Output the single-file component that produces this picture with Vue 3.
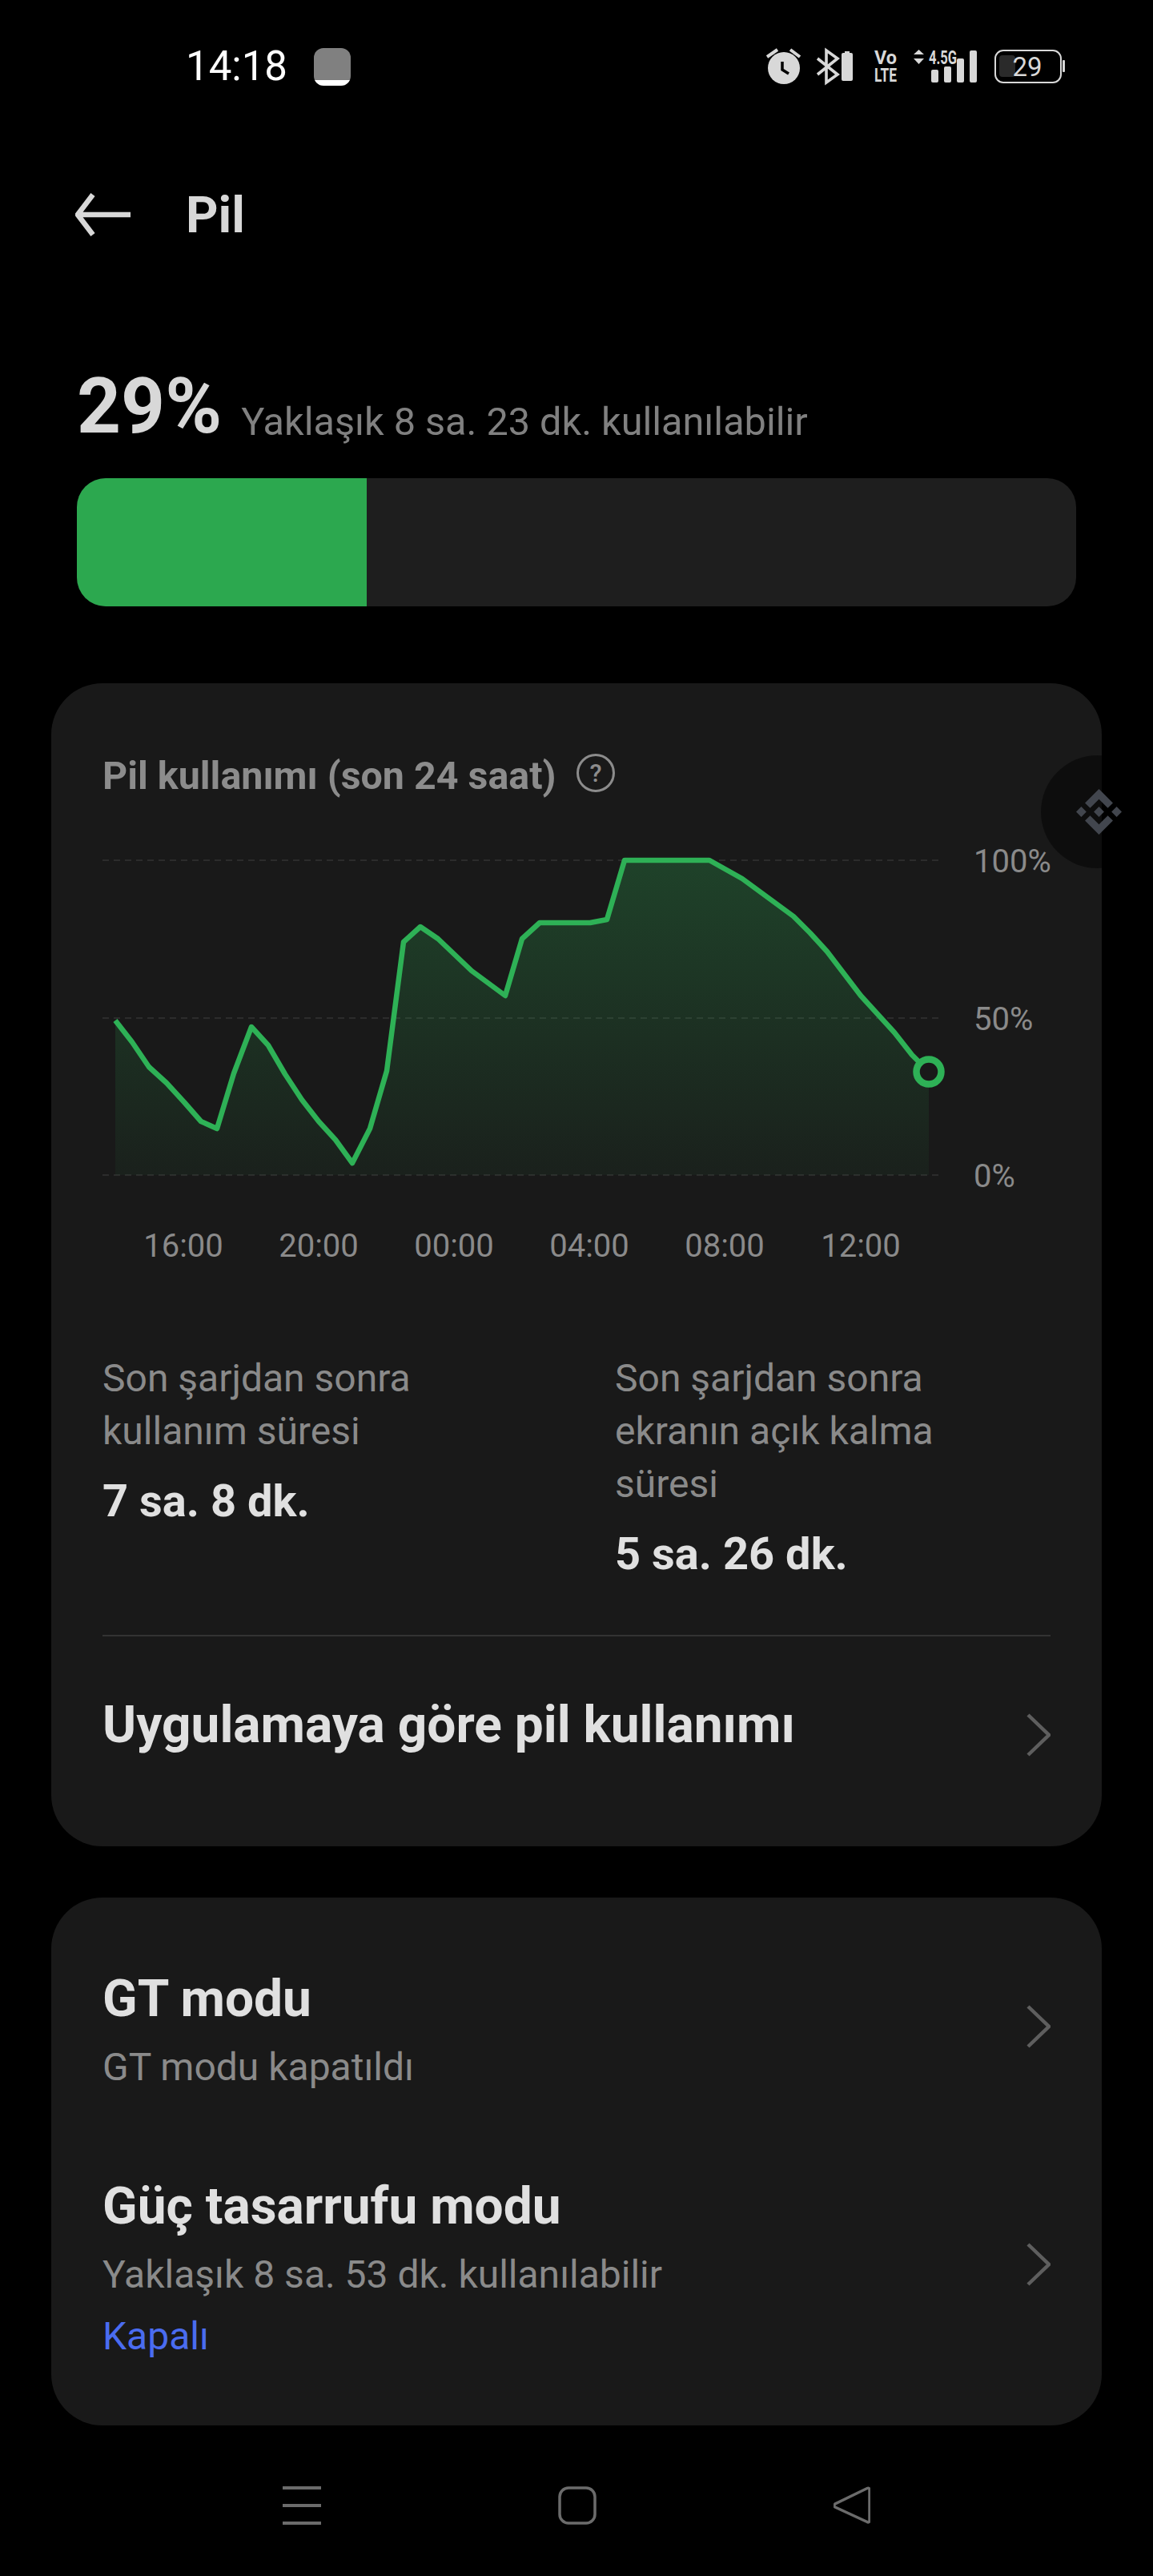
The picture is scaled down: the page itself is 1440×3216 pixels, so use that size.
<template>
  <div class="page">
    <div class="status">
      <span class="clock">14:18</span>
      <span class="square"></span>
      <svg class="status-icons" width="385" height="55" viewBox="950 55 385 55">
        <circle cx="979" cy="85" r="20" fill="#d8d8d8" />
        <path d="M977 77v10l8 5" fill="none" stroke="#000" stroke-width="3.5" />
        <path d="M958 71l13-9M987 62l12 9" fill="none" stroke="#d8d8d8" stroke-width="4" />
        <path d="M1021 73l25 20-14 10V63l14 10-25 20" fill="none" stroke="#d8d8d8" stroke-width="3.6" />
        <rect x="1051" y="66" width="14" height="35" rx="2" fill="#d8d8d8" />
        <rect x="1055" y="64" width="6" height="2" fill="#d8d8d8" />
        <text x="1092" y="80" class="tiny" textLength="28" lengthAdjust="spacingAndGlyphs">Vo</text>
        <text x="1092" y="102" class="tiny" textLength="28" lengthAdjust="spacingAndGlyphs">LTE</text>
        <path d="M1141 68l6.500-6 6.500 6zM1141 73h13l-6.500 7z" fill="#d8d8d8" />
        <text x="1160" y="80" class="tiny" textLength="35" lengthAdjust="spacingAndGlyphs">4.5G</text>
        <rect x="1163" y="87" width="9" height="16" rx="2" fill="#d8d8d8" />
        <rect x="1179" y="83" width="9" height="20" rx="2" fill="#d8d8d8" />
        <rect x="1195" y="73" width="9" height="30" rx="2" fill="#d8d8d8" />
        <rect x="1211" y="63" width="9" height="40" rx="2" fill="#d8d8d8" />
        <rect x="1243" y="63" width="82" height="40" rx="10" fill="none" stroke="#d8d8d8" stroke-width="2" />
        <rect x="1248" y="69" width="20" height="27" rx="4" fill="#2a2a2a" />
        <text x="1283" y="95" class="batt-num" text-anchor="middle">29</text>
        <rect x="1327" y="75" width="3" height="15" rx="1" fill="#d8d8d8" />
      </svg>
    </div>

    <div class="topbar">
      <svg width="69" height="54" viewBox="0 0 69 54">
        <path d="M69 27H3M22 2L3 27l19 25" fill="none" stroke="#d8d8d8" stroke-width="6.500" />
      </svg>
      <span class="topbar-title">Pil</span>
    </div>

    <div class="summary">
      <span class="percent">{{ level }}%</span>
      <span class="remain">Yaklaşık 8 sa. 23 dk. kullanılabilir</span>
    </div>
    <div class="bar">
      <div class="bar-fill" :style="{ width: level + '%' }"></div>
    </div>

    <section class="card usage">
      <div class="usage-title">
        <span>Pil kullanımı (son 24 saat)</span>
        <svg width="48" height="48" viewBox="0 0 48 48">
          <circle cx="24" cy="24" r="22.500" fill="none" stroke="#8c8c8c" stroke-width="3" />
          <text x="24" y="35" class="help" text-anchor="middle">?</text>
        </svg>
      </div>

      <svg class="chart" width="1184" height="540" viewBox="128 1050 1184 540">
        <defs>
          <linearGradient id="areaFill" gradientUnits="userSpaceOnUse" x1="0" y1="1074" x2="0" y2="1467">
            <stop offset="0" stop-color="#2eb156" stop-opacity="0.27" />
            <stop offset="1" stop-color="#2eb156" stop-opacity="0.05" />
          </linearGradient>
        </defs>
        <line
          v-for="g in grid"
          :key="g.label"
          x1="128"
          x2="1175"
          :y1="g.y"
          :y2="g.y"
          stroke="#2c2c2c"
          stroke-width="2"
          stroke-dasharray="8 6"
        />
        <polygon :points="areaPoints" fill="url(#areaFill)" />
        <polyline :points="linePoints" fill="none" stroke="#2eb156" stroke-width="6.500" stroke-linejoin="round" />
        <circle cx="1160" cy="1338" r="15.500" fill="#191919" stroke="#2eb156" stroke-width="8.500" />
        <text v-for="g in grid" :key="g.label" x="1216" :y="g.y + 15" class="axis">{{ g.label }}</text>
        <text v-for="t in hours" :key="t.label" :x="t.x" y="1569" class="axis" text-anchor="middle">{{ t.label }}</text>
      </svg>

      <div class="stats">
        <div>
          <p class="stat-label">Son şarjdan sonra<br />kullanım süresi</p>
          <p class="stat-value">7 sa. 8 dk.</p>
        </div>
        <div>
          <p class="stat-label">Son şarjdan sonra<br />ekranın açık kalma<br />süresi</p>
          <p class="stat-value">5 sa. 26 dk.</p>
        </div>
      </div>

      <div class="per-app">
        <span class="row-title">Uygulamaya göre pil kullanımı</span>
        <svg class="chev chev-app" width="30" height="54" viewBox="0 0 30 54">
          <path d="M2 2l26 25L2 52" fill="none" stroke="#5e5e5e" stroke-width="4.500" />
        </svg>
      </div>
    </section>

    <section class="card modes">
      <div class="mode">
        <div>
          <p class="row-title">GT modu</p>
          <p class="mode-sub">GT modu kapatıldı</p>
        </div>
        <svg class="chev" width="30" height="54" viewBox="0 0 30 54">
          <path d="M2 2l26 25L2 52" fill="none" stroke="#5e5e5e" stroke-width="4.500" />
        </svg>
      </div>
      <div class="mode mode-saver">
        <div>
          <p class="row-title">Güç tasarrufu modu</p>
          <p class="mode-sub">Yaklaşık 8 sa. 53 dk. kullanılabilir</p>
          <p class="mode-off">Kapalı</p>
        </div>
        <svg class="chev" width="30" height="54" viewBox="0 0 30 54">
          <path d="M2 2l26 25L2 52" fill="none" stroke="#5e5e5e" stroke-width="4.500" />
        </svg>
      </div>
    </section>

    <div class="navbar">
      <svg width="48" height="48" viewBox="0 0 48 48">
        <path d="M0 2h48M0 24h48M0 46h48" stroke="#6b6b6b" stroke-width="4" />
      </svg>
      <svg width="48" height="48" viewBox="0 0 48 48">
        <rect x="2" y="2" width="44" height="44" rx="11" fill="none" stroke="#6b6b6b" stroke-width="3.500" />
      </svg>
      <svg width="46" height="48" viewBox="0 0 46 48">
        <path d="M42 2.500c2-.800 3 .500 3 2v38c0 2-1.500 3-3 2L2 26c-1.500-1-1.500-2.500 0-4z" fill="none" stroke="#6b6b6b" stroke-width="3.500" />
      </svg>
    </div>

    <div class="floater">
      <svg width="57" height="57" viewBox="0 0 32 32" fill="#42464e">
        <path d="M16 0l9.800 9.800-3.600 3.600L16 7.200l-6.200 6.200-3.600-3.600zM0 16l3.600-3.600L7.200 16l-3.600 3.600zM16 32l-9.800-9.800 3.600-3.600 6.200 6.200 6.200-6.200 3.600 3.600zM24.800 16l3.600-3.600L32 16l-3.600 3.600zM16 12.400l3.600 3.600-3.600 3.600-3.600-3.600z" />
      </svg>
    </div>
  </div>
</template>

<script setup>
const level = 29;

const grid = [
  { label: "100%", y: 1074 },
  { label: "50%", y: 1271 },
  { label: "0%", y: 1467 },
];

const hours = [
  { label: "16:00", x: 229 },
  { label: "20:00", x: 398 },
  { label: "00:00", x: 567 },
  { label: "04:00", x: 736 },
  { label: "08:00", x: 905 },
  { label: "12:00", x: 1075 },
];

const points = [
  [144, 1274], [165, 1301], [186, 1332], [208, 1352], [230, 1376], [251, 1400],
  [271, 1409], [292, 1340], [314, 1282], [335, 1305], [356, 1341], [377, 1373],
  [398, 1400], [419, 1423], [440, 1452], [462, 1409], [483, 1337], [504, 1176],
  [525, 1157], [547, 1172], [589, 1212], [631, 1243], [652, 1172], [674, 1152],
  [737, 1152], [758, 1148], [780, 1074], [886, 1074], [927, 1097], [991, 1144],
  [1012, 1165], [1033, 1188], [1075, 1243], [1117, 1289], [1139, 1317], [1160, 1338],
];

const linePoints = points.map((p) => p.join(",")).join(" ");
const areaPoints = `144,1467 ${linePoints} 1160,1467`;
</script>

<style scoped>
.page {
  position: relative;
  width: 1440px;
  height: 3216px;
  overflow: hidden;
  background: #000;
  font-family: Roboto, "Noto Sans", sans-serif;
}

p {
  margin: 0;
}

svg {
  display: block;
  flex: none;
}

.status {
  display: flex;
  align-items: center;
  height: 165px;
  padding: 0 105px 0 232px;
}

.clock {
  font-size: 51px;
  color: #fff;
}

.square {
  width: 46px;
  height: 47px;
  margin-left: 33px;
  margin-top: 2px;
  border-radius: 12px;
  background: linear-gradient(#808080 85%, #fff 85%);
}

.status-icons {
  margin-left: auto;
}

.tiny {
  font-size: 24px;
  font-weight: 700;
  fill: #d8d8d8;
}

.batt-num {
  font-size: 33px;
  fill: #d8d8d8;
}

.topbar {
  display: flex;
  align-items: center;
  gap: 69px;
  height: 104px;
  margin-top: 51px;
  padding-left: 94px;
}

.topbar-title {
  font-size: 63px;
  font-weight: 700;
  color: #d8d8d8;
}

.summary {
  display: flex;
  align-items: flex-end;
  gap: 24px;
  margin: 131px 96px 0;
}

.percent {
  font-size: 96px;
  line-height: 112px;
  font-weight: 700;
  color: #d8d8d8;
}

.remain {
  margin-bottom: 9px;
  font-size: 48.600px;
  line-height: 54px;
  color: #808080;
}

.bar {
  height: 160px;
  margin: 34px 96px 0;
  border-radius: 36px;
  overflow: hidden;
  background: #1e1e1e;
}

.bar-fill {
  height: 100%;
  background: #2ca84f;
}

.card {
  margin: 0 64px;
  padding: 0 64px;
  border-radius: 64px;
  background: #191919;
}

.usage {
  margin-top: 96px;
  padding-top: 89px;
  padding-bottom: 114px;
}

.usage-title {
  display: flex;
  align-items: center;
  gap: 25px;
  font-size: 48.400px;
  line-height: 54px;
  font-weight: 700;
  color: #8c8c8c;
}

.usage-title svg {
  margin-top: -8px;
}

.help {
  font-size: 31px;
  font-weight: 500;
  fill: #8c8c8c;
}

.chart {
  margin-top: 54px;
}

.axis {
  font-size: 40px;
  fill: #8a8a8a;
}

.stats {
  display: grid;
  grid-template-columns: 640px 1fr;
  margin-top: 98px;
}

.stat-label {
  font-size: 48px;
  line-height: 66px;
  color: #8a8a8a;
}

.stat-value {
  margin-top: 24px;
  font-size: 56px;
  line-height: 60px;
  font-weight: 700;
  color: #e0e0e0;
}

.per-app {
  display: flex;
  justify-content: space-between;
  align-items: flex-start;
  margin-top: 71px;
  padding-top: 73px;
  border-top: 2px solid #333;
}

.row-title {
  font-size: 64px;
  line-height: 75px;
  font-weight: 700;
  color: #e0e0e0;
}

.chev-app {
  margin: 23px 0 -2px;
}

.modes {
  margin-top: 64px;
  padding-top: 89px;
  padding-bottom: 84px;
}

.mode {
  display: flex;
  justify-content: space-between;
  align-items: center;
}

.mode .chev {
  margin-top: -7px;
}

.mode-saver {
  margin-top: 109px;
}

.mode-sub {
  margin-top: 21px;
  font-size: 48px;
  line-height: 54px;
  color: #8a8a8a;
}

.mode-off {
  margin-top: 23px;
  font-size: 48px;
  line-height: 54px;
  color: #4a6cf0;
}

.navbar {
  display: flex;
  justify-content: space-between;
  margin-top: 76px;
  padding: 0 353px;
}

.floater {
  position: absolute;
  left: 1300px;
  top: 943px;
  display: flex;
  align-items: center;
  justify-content: center;
  width: 141px;
  height: 141px;
  padding-left: 3px;
  box-sizing: border-box;
  border-radius: 50%;
  background: rgba(0, 0, 0, 0.45);
}
</style>

<style>
html,
body {
  background: #000;
}
</style>
